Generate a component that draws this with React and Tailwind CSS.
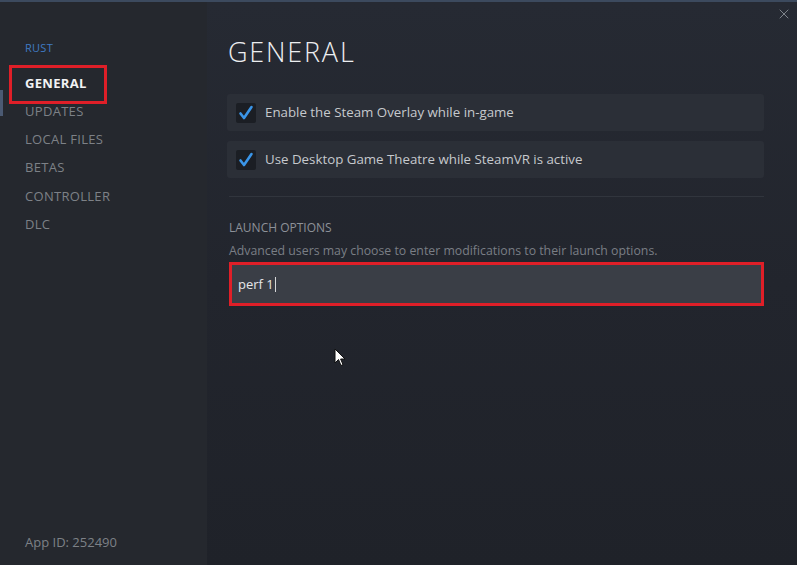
import React from 'react';
import { X } from 'lucide-react';

const navItems = ['UPDATES', 'LOCAL FILES', 'BETAS', 'CONTROLLER', 'DLC'];

const options = [
  'Enable the Steam Overlay while in-game',
  'Use Desktop Game Theatre while SteamVR is active',
];

const Check = () => (
  <div className="w-[20px] h-[20px] rounded-[2px] bg-[#1b1e24] flex items-center justify-center shrink-0">
    <svg width="16" height="16" viewBox="0 0 16 16">
      <path d="M2.5 8.5 L6 13 L13.5 2" fill="none" stroke="#3a95e8" strokeWidth="2.6" strokeLinecap="round" strokeLinejoin="round" />
    </svg>
  </div>
);

const App = () => {
  return (
    <div
      className="w-[797px] h-[565px] flex overflow-hidden relative border-t-2 border-[#3c4a5e] bg-[#22252d]"
      style={{ fontFamily: '"Open Sans", "Noto Sans", sans-serif' }}
    >
      {/* Sidebar */}
      <div className="w-[207px] shrink-0 bg-[#25282e] flex flex-col relative">
        <div className="absolute left-0 top-[88px] w-[3px] h-[26px] bg-[#4b5a73]" />
        <div className="pl-[25px] pt-[38px] text-[11px] text-[#3f7ac4] tracking-wide">RUST</div>
        <div className="mt-[8px] ml-[9px] w-[98px] h-[39px] border-[3px] border-[#df1f28] flex items-center pl-[13px]">
          <span className="text-[13px] font-bold text-[#f2f3f4] tracking-[0.3px]">GENERAL</span>
        </div>
        <div className="flex flex-col pl-[25px] mt-[-6px]">
          {navItems.map((item) => (
            <div key={item} className="h-[28.3px] flex items-center text-[13px] text-[#7d8187] tracking-[0.3px]">
              {item}
            </div>
          ))}
        </div>
        <div className="mt-auto pl-[25px] pb-[13px] text-[13px] text-[#7d8187]">App ID: 252490</div>
      </div>

      {/* Main */}
      <div className="flex-1 bg-gradient-to-b from-[#262a33] via-[#22252d] to-[#1f2229] pl-[20px] pr-[33px] pt-[30px] relative">
        <button className="absolute right-[5px] top-[4px] text-[#7f848b]">
          <X size={16} strokeWidth={1.5} />
        </button>
        <h1 className="text-[27px] leading-[40px] font-light text-[#eceef0] tracking-[1.8px] pl-[1px]">GENERAL</h1>
        <div className="mt-[22px] flex flex-col gap-[10px]">
          {options.map((label) => (
            <div key={label} className="h-[37px] rounded-[3px] bg-[#2b2f37] flex items-center gap-[9px] pl-[9px]">
              <Check />
              <span className="text-[13.3px] text-[#c6c9cd]">{label}</span>
            </div>
          ))}
        </div>
        <div className="mt-[18px] h-px bg-[#31353d] ml-[2px]" />
        <div className="mt-[22px] pl-[2px] text-[12px] text-[#8d9198]">LAUNCH OPTIONS</div>
        <div className="mt-[5px] pl-[2px] text-[12.3px] text-[#7a7e85]">
          Advanced users may choose to enter modifications to their launch options.
        </div>
        <div className="mt-[2px] ml-[2px] h-[44px] border-[3px] border-[#df1f28] bg-[#3a3e46] flex items-center pl-[6px]">
          <span className="text-[13px] text-[#e6e7e9]">perf 1</span>
          <span className="w-px h-[15px] bg-[#d6d7d9] ml-[1px]" />
        </div>
        {/* mouse cursor */}
        <svg className="absolute left-[127px] top-[346px]" width="12" height="19" viewBox="0 0 12 19">
          <path d="M1 1 L1 15 L4.5 11.5 L7 17.5 L9 16.6 L6.6 11 L11 11 Z" fill="#ffffff" stroke="#111" strokeWidth="1" strokeLinejoin="round" />
        </svg>
      </div>
    </div>
  );
};

export default App;
